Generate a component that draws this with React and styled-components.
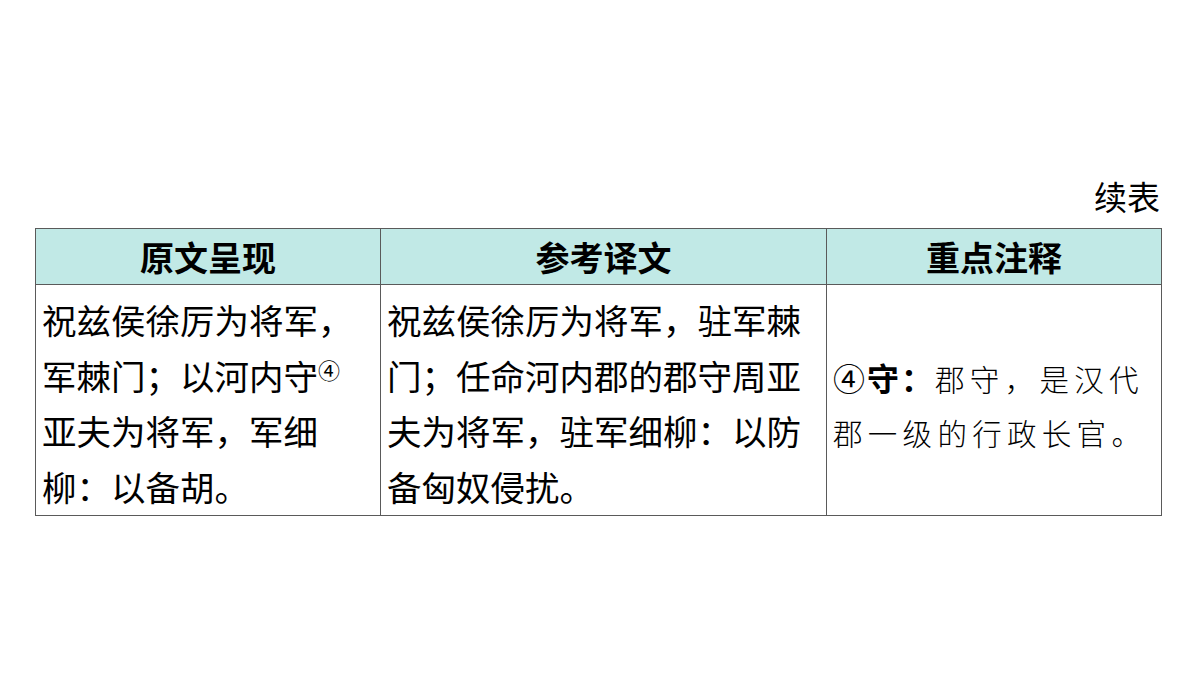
import React from 'react';
import styled, { createGlobalStyle } from 'styled-components';

const GlobalStyle = createGlobalStyle`
  body {
    margin: 0;
    background: #fff;
    font-family: "Noto Sans CJK SC", "Noto Sans", sans-serif;
    color: #000;
  }
`;

const Page = styled.div`
  width: 1200px;
  height: 675px;
  padding: 173px 39px 0 35px;
  box-sizing: border-box;
`;

const Caption = styled.div`
  text-align: right;
  font-size: 33px;
  line-height: 46px;
  margin-right: 1px;
  margin-bottom: 9px;
`;

const Table = styled.table`
  width: 1126px;
  border-collapse: collapse;
  table-layout: fixed;
`;

const HeadCell = styled.th`
  width: ${props => props.$w}px;
  height: 55px;
  padding: 0;
  background: #c1e9e6;
  border: 1px solid #5a5a5a;
  font-size: 34px;
  font-weight: 700;
  text-align: center;
  vertical-align: middle;
  line-height: 1;
`;

const Cell = styled.td`
  height: 231px;
  padding: ${props => (props.$note ? '8px 4px 0 6px' : '7px 6px 1px 6px')};
  border: 1px solid #5a5a5a;
  vertical-align: ${props => (props.$note ? 'middle' : 'top')};
  text-align: left;
  font-size: 34.5px;
  line-height: 55.5px;
  box-sizing: border-box;
`;

const Mark = styled.sup`
  font-size: 22px;
  line-height: 0;
  vertical-align: 11px;
`;

const Note = styled.div`
  font-family: "KaiTi", "STKaiti", "Noto Sans CJK SC", serif;
  font-size: 29.5px;
  line-height: 54px;
  letter-spacing: 5.3px;
  font-weight: 300;
`;

const NoteKey = styled.span`
  font-family: "Noto Sans CJK SC", sans-serif;
  font-weight: 700;
  font-size: 32px;
  letter-spacing: 2px;
`;

const Circled = styled.span`
  font-weight: 400;
`;

export default function App() {
  return (
    <Page>
      <GlobalStyle />
      <Caption>续表</Caption>
      <Table>
        <thead>
          <tr>
            <HeadCell $w={344}>原文呈现</HeadCell>
            <HeadCell $w={445}>参考译文</HeadCell>
            <HeadCell $w={334}>重点注释</HeadCell>
          </tr>
        </thead>
        <tbody>
          <tr>
            <Cell>
              祝兹侯徐厉为将军，军棘门；以河内守<Mark>④</Mark>亚夫为将军，军细柳：以备胡。
            </Cell>
            <Cell>
              祝兹侯徐厉为将军，驻军棘门；任命河内郡的郡守周亚夫为将军，驻军细柳：以防备匈奴侵扰。
            </Cell>
            <Cell $note>
              <Note>
                <NoteKey><Circled>④</Circled>守：</NoteKey>郡守，是汉代郡一级的行政长官。
              </Note>
            </Cell>
          </tr>
        </tbody>
      </Table>
    </Page>
  );
}
